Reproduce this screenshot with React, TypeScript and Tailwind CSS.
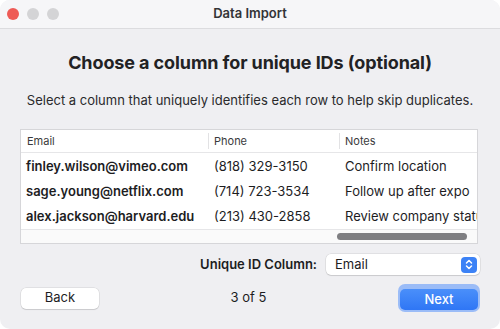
const rows = [
  { email: "finley.wilson@vimeo.com", phone: "(818) 329-3150", notes: "Confirm location" },
  { email: "sage.young@netflix.com", phone: "(714) 723-3534", notes: "Follow up after expo" },
  { email: "alex.jackson@harvard.edu", phone: "(213) 430-2858", notes: "Review company status" },
];

export default function App() {
  return (
    <div className="w-[500px] h-[329px] bg-white" style={{ fontFamily: "Inter, 'Noto Sans', sans-serif" }}>
      <div className="w-full h-full rounded-[10px] overflow-hidden bg-[#efeff2] flex flex-col">
        {/* Title bar */}
        <div className="h-[29px] shrink-0 bg-[#f6f6f8] border-b border-[#dcdcdf] flex items-center relative">
          <div className="flex items-center gap-[8px] pl-[7px]">
            <span className="w-[12px] h-[12px] rounded-full bg-[#ee5b56]" />
            <span className="w-[12px] h-[12px] rounded-full bg-[#d4d4d6]" />
            <span className="w-[12px] h-[12px] rounded-full bg-[#d4d4d6]" />
          </div>
          <div className="absolute inset-0 flex items-center justify-center text-[13px] font-semibold text-[#333336]">
            Data Import
          </div>
        </div>

        {/* Body */}
        <div className="flex-1 flex flex-col px-[20px]">
          <h1 className="mt-[22px] text-center text-[18px] font-bold text-[#222224] leading-[24px] tracking-[-0.1px]">
            Choose a column for unique IDs (optional)
          </h1>
          <p className="mt-[17px] text-center text-[13px] text-[#2a2a2c] leading-[16px]">
            Select a column that uniquely identifies each row to help skip duplicates.
          </p>

          {/* Table */}
          <div className="mt-[21px] w-[458px] h-[115px] bg-white border border-[#d6d6d9] overflow-hidden flex flex-col">
            <div className="h-[23px] flex items-center border-b border-[#e6e6e8] text-[11px] text-[#3a3a3c]">
              <div className="w-[187px] pl-[6px] shrink-0">Email</div>
              <div className="w-[131px] shrink-0 border-l border-[#e2e2e4] pl-[5px]">Phone</div>
              <div className="shrink-0 border-l border-[#e2e2e4] pl-[5px]">Notes</div>
            </div>
            <div className="flex flex-col pt-[1px]">
              {rows.map((r) => (
                <div key={r.email} className="h-[25px] flex items-center text-[13px] text-[#1d1d1f] whitespace-nowrap">
                  <div className="w-[187px] pl-[5px] shrink-0 font-semibold">{r.email}</div>
                  <div className="w-[131px] pl-[6px] shrink-0">{r.phone}</div>
                  <div className="pl-[6px] shrink-0">{r.notes}</div>
                </div>
              ))}
            </div>
            <div className="flex-1 border-t border-[#e6e6e8] bg-[#fafafa] flex items-center">
              <div className="ml-[316px] w-[130px] h-[7px] rounded-full bg-[#7f7f82]" />
            </div>
          </div>

          {/* Unique column picker */}
          <div className="mt-[10px] flex items-center justify-end gap-[9px]">
            <span className="text-[13px] font-semibold text-[#1d1d1f]">Unique ID Column:</span>
            <div className="w-[154px] h-[21px] bg-white rounded-[5px] shadow-[0_0_0_0.5px_rgba(0,0,0,0.12),0_1px_1px_rgba(0,0,0,0.1)] flex items-center justify-between pl-[9px] pr-[3px]">
              <span className="text-[13px] text-[#1d1d1f]">Email</span>
              <div className="w-[16px] h-[16px] rounded-[4px] bg-[#3c82f6] flex items-center justify-center">
                <svg width="8" height="11" viewBox="0 0 8 11" fill="none" stroke="white" strokeWidth="1.5" strokeLinecap="round" strokeLinejoin="round">
                  <path d="M1.5 4 L4 1.5 L6.5 4" />
                  <path d="M1.5 7 L4 9.5 L6.5 7" />
                </svg>
              </div>
            </div>
          </div>

          {/* Footer */}
          <div className="mt-[9px] flex items-center justify-between">
            <button className="ml-[1px] w-[78px] h-[21px] bg-white rounded-[5px] shadow-[0_0_0_0.5px_rgba(0,0,0,0.12),0_1px_1px_rgba(0,0,0,0.1)] text-[13px] text-[#1d1d1f]">
              Back
            </button>
            <span className="text-[13px] text-[#1d1d1f]">3 of 5</span>
            <div className="rounded-[7px] p-[2px] bg-[#9bbcf7]">
              <button className="w-[78px] h-[21px] rounded-[5px] bg-gradient-to-b from-[#4a8ffa] to-[#2f76f5] text-[13px] font-medium text-white">
                Next
              </button>
            </div>
          </div>
        </div>
      </div>
    </div>
  );
}
